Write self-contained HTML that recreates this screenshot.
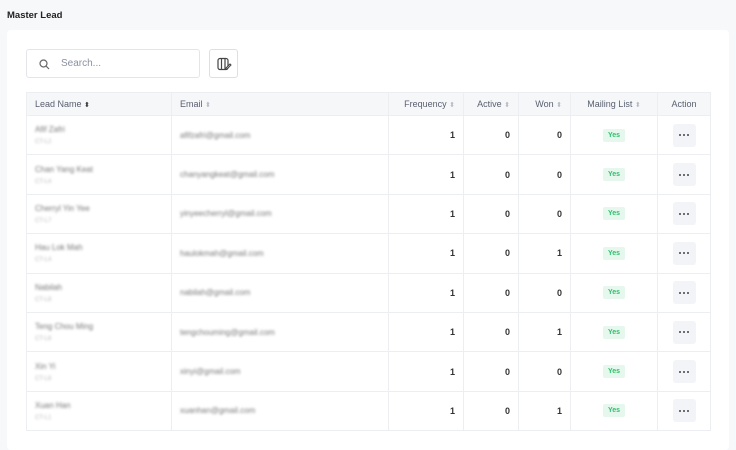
<!DOCTYPE html>
<html><head><style>
*{box-sizing:border-box;margin:0;padding:0}
body{width:736px;height:437px;background:#f7f8fa;font-family:"Liberation Sans",sans-serif;overflow:hidden;position:relative;color:#333}
.title{position:absolute;left:7px;top:10px;font-size:9.5px;font-weight:bold;color:#222}
.card{position:absolute;left:7px;top:30px;width:722px;height:420px;background:#fff;border-radius:4px}
.search{position:absolute;left:26px;top:49px;width:174px;height:29px;border:1px solid #e3e5ea;border-radius:3px}
.search span{position:absolute;left:34px;top:8px;font-size:10px;color:#8a90a0}
.colbtn{position:absolute;left:209px;top:49px;width:29px;height:29px;border:1px solid #dcdfe5;border-radius:3px}
table{position:absolute;left:26px;top:92px;border-collapse:collapse;font-size:9px;table-layout:fixed;width:684px}
th{background:#f6f7f9;height:23px;font-weight:normal;color:#5a6070;border:1px solid #eceef2;padding:0 8px;text-align:left}
td{height:39.4px;border:1px solid #eceef2;padding:0 8px;font-weight:bold;color:#333}
th.r,td.r{text-align:right}
th.c,td.c{text-align:center}
.s{color:#b5bac4;font-size:7px}
.blur{filter:blur(1.3px);color:#888;font-weight:normal}
.n1{font-size:8px;color:#777}.n2{font-size:6px;color:#bbb;margin-top:5px}
.yes{display:inline-block;background:#e6f8ee;color:#2ebf6b;font-size:7px;padding:3px 5px;border-radius:2px}
.dots{display:inline-flex;align-items:center;justify-content:center;width:23px;height:23px;background:#f3f4f7;border-radius:3px;vertical-align:middle}
.dots i{display:inline-block;width:2px;height:2px;background:#444;border-radius:1px;margin:0 1px}
</style></head><body>
<div class="title">Master Lead</div>
<div class="card"></div>
<div class="search"><svg style="position:absolute;left:12px;top:9px" width="11" height="11" viewBox="0 0 11 11"><circle cx="4.5" cy="4.5" r="3.5" fill="none" stroke="#666" stroke-width="1.2"/><path d="M7 7l3 3" stroke="#666" stroke-width="1.2"/></svg><span>Search...</span></div>
<div class="colbtn"><svg style="position:absolute;left:7px;top:7px" width="15" height="14" viewBox="0 0 15 14"><rect x="1" y="1.5" width="10" height="11" rx="2" fill="none" stroke="#444" stroke-width="1.2"/><path d="M4.5 1.5v11M8 1.5v11" stroke="#444" stroke-width="1.2"/><path d="M9 11l4-4 1 1-4 4h-1z" fill="#fff" stroke="#444" stroke-width="1"/></svg></div>
<table>
<tr><th style="width:145px">Lead Name <span style="color:#333;font-size:7px">⬍</span></th><th style="width:217px">Email <span class="s">⬍</span></th><th class="r" style="width:75px">Frequency <span class="s">⬍</span></th><th class="r" style="width:55px">Active <span class="s">⬍</span></th><th class="r" style="width:52px">Won <span class="s">⬍</span></th><th class="c" style="width:87px">Mailing List <span class="s">⬍</span></th><th class="c" style="width:53px">Action</th></tr>
<tr><td class="blur"><div class="n1">Afif Zafri</div><div class="n2">CT-L2</div></td><td class="blur n1">afifzafri@gmail.com</td><td class="r">1</td><td class="r">0</td><td class="r">0</td><td class="c"><span class="yes">Yes</span></td><td class="c"><span class="dots"><i></i><i></i><i></i></span></td></tr>
<tr><td class="blur"><div class="n1">Chan Yang Keat</div><div class="n2">CT-L4</div></td><td class="blur n1">chanyangkeat@gmail.com</td><td class="r">1</td><td class="r">0</td><td class="r">0</td><td class="c"><span class="yes">Yes</span></td><td class="c"><span class="dots"><i></i><i></i><i></i></span></td></tr>
<tr><td class="blur"><div class="n1">Cherryl Yin Yee</div><div class="n2">CT-L7</div></td><td class="blur n1">yinyeecherryl@gmail.com</td><td class="r">1</td><td class="r">0</td><td class="r">0</td><td class="c"><span class="yes">Yes</span></td><td class="c"><span class="dots"><i></i><i></i><i></i></span></td></tr>
<tr><td class="blur"><div class="n1">Hau Lok Mah</div><div class="n2">CT-L4</div></td><td class="blur n1">haulokmah@gmail.com</td><td class="r">1</td><td class="r">0</td><td class="r">1</td><td class="c"><span class="yes">Yes</span></td><td class="c"><span class="dots"><i></i><i></i><i></i></span></td></tr>
<tr><td class="blur"><div class="n1">Nabilah</div><div class="n2">CT-L8</div></td><td class="blur n1">nabilah@gmail.com</td><td class="r">1</td><td class="r">0</td><td class="r">0</td><td class="c"><span class="yes">Yes</span></td><td class="c"><span class="dots"><i></i><i></i><i></i></span></td></tr>
<tr><td class="blur"><div class="n1">Teng Chou Ming</div><div class="n2">CT-L8</div></td><td class="blur n1">tengchouming@gmail.com</td><td class="r">1</td><td class="r">0</td><td class="r">1</td><td class="c"><span class="yes">Yes</span></td><td class="c"><span class="dots"><i></i><i></i><i></i></span></td></tr>
<tr><td class="blur"><div class="n1">Xin Yi</div><div class="n2">CT-L8</div></td><td class="blur n1">xinyi@gmail.com</td><td class="r">1</td><td class="r">0</td><td class="r">0</td><td class="c"><span class="yes">Yes</span></td><td class="c"><span class="dots"><i></i><i></i><i></i></span></td></tr>
<tr><td class="blur"><div class="n1">Xuan Han</div><div class="n2">CT-L1</div></td><td class="blur n1">xuanhan@gmail.com</td><td class="r">1</td><td class="r">0</td><td class="r">1</td><td class="c"><span class="yes">Yes</span></td><td class="c"><span class="dots"><i></i><i></i><i></i></span></td></tr>
</table>
</body></html>
